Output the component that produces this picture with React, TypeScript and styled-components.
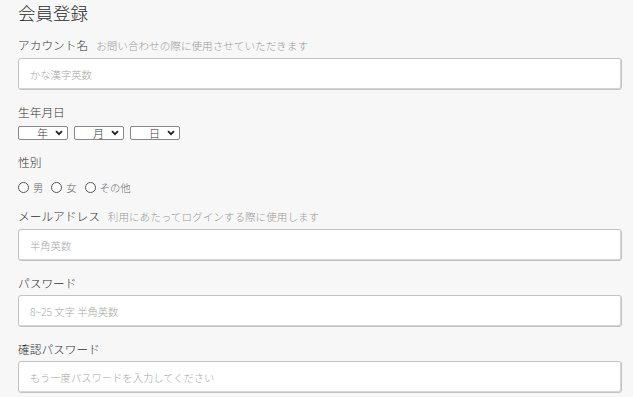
import styled, { createGlobalStyle } from 'styled-components';

const GlobalStyle = createGlobalStyle`
	html, body {
		margin: 0;
		padding: 0;
		background: #f7f7f7;
	}
	body {
		font-family: "Noto Sans CJK JP", "Noto Sans", sans-serif;
		font-weight: 300;
		color: #333;
	}
`;

const fields = [
	{ key: 'mail', label: 'メールアドレス', hint: '利用にあたってログインする際に使用します', placeholder: '半角英数', type: 'email' },
	{ key: 'pass', label: 'パスワード', hint: '', placeholder: '8~25 文字 半角英数', type: 'password' },
	{ key: 'confirm', label: '確認パスワード', hint: '', placeholder: 'もう一度パスワードを入力してください', type: 'password' },
];

function Chevron() {
	return (
		<svg width="8" height="6" viewBox="0 0 8 6">
			<path d="M1 1.2 L4 4.2 L7 1.2" fill="none" stroke="#222" strokeWidth="1.8" />
		</svg>
	);
}

function App() {
	return (
		<Form>
			<GlobalStyle />
			<Title>会員登録</Title>

			<Group>
				<Label>
					アカウント名<Hint>お問い合わせの際に使用させていただきます</Hint>
				</Label>
				<TextInput type="text" placeholder="かな漢字英数" />
			</Group>

			<Group>
				<Label>生年月日</Label>
				<Dates>
					{['年', '月', '日'].map((unit) => (
						<SelectBox key={unit}>
							<span>{unit}</span>
							<Chevron />
						</SelectBox>
					))}
				</Dates>
			</Group>

			<Group>
				<Label>性別</Label>
				<Radios>
					{['男', '女', 'その他'].map((g) => (
						<RadioItem key={g}>
							<input type="radio" name="gender" />
							{g}
						</RadioItem>
					))}
				</Radios>
			</Group>

			{fields.map((f) => (
				<Group key={f.key}>
					<Label>
						{f.label}
						{f.hint && <Hint>{f.hint}</Hint>}
					</Label>
					<TextInput type={f.type} placeholder={f.placeholder} />
				</Group>
			))}
		</Form>
	);
}

const Form = styled.form`
	padding: 0 11px 0 18px;
	display: flex;
	flex-direction: column;
`;

const Title = styled.h1`
	margin: 0 0 11px;
	font-size: 17.5px;
	line-height: 26px;
	font-weight: 300;
	color: #2b2b2b;
`;

const Group = styled.div`
	display: flex;
	flex-direction: column;
	gap: 4px;
	margin-bottom: 14px;
`;

const Label = styled.label`
	font-size: 11.7px;
	line-height: 16px;
	color: #333;
	display: flex;
	align-items: baseline;
`;

const Hint = styled.span`
	font-size: 10.6px;
	color: #999;
	margin-left: 8px;
`;

const TextInput = styled.input`
	box-sizing: border-box;
	width: 100%;
	height: 32px;
	padding: 0 11px;
	border: 1px solid #c2c2c2;
	border-radius: 3px;
	background: #fff;
	box-shadow: inset -1px -1px 0 #d6d6d6;
	font-family: inherit;
	font-weight: 300;
	font-size: 10.3px;
	color: #333;
	outline: none;

	&::placeholder {
		color: #a6a6a6;
	}
`;

const Dates = styled.div`
	display: flex;
	gap: 6px;
	margin-top: 2px;
`;

const SelectBox = styled.div`
	box-sizing: border-box;
	width: 50px;
	height: 14px;
	border: 1px solid #888;
	border-radius: 2px;
	background: #fff;
	display: flex;
	align-items: center;
	justify-content: flex-end;
	gap: 7px;
	padding-right: 4px;
	font-size: 11px;
	line-height: 12px;
	color: #333;
`;

const Radios = styled.div`
	display: flex;
	gap: 8px;
	margin-top: 6px;
	height: 14px;
	align-items: center;
`;

const RadioItem = styled.label`
	display: flex;
	align-items: center;
	gap: 4px;
	font-size: 10.3px;
	color: #666;

	input {
		margin: 0;
		width: 11px;
		height: 11px;
		appearance: none;
		border: 1px solid #555;
		border-radius: 50%;
		background: #fff;
	}
`;

export default App;
